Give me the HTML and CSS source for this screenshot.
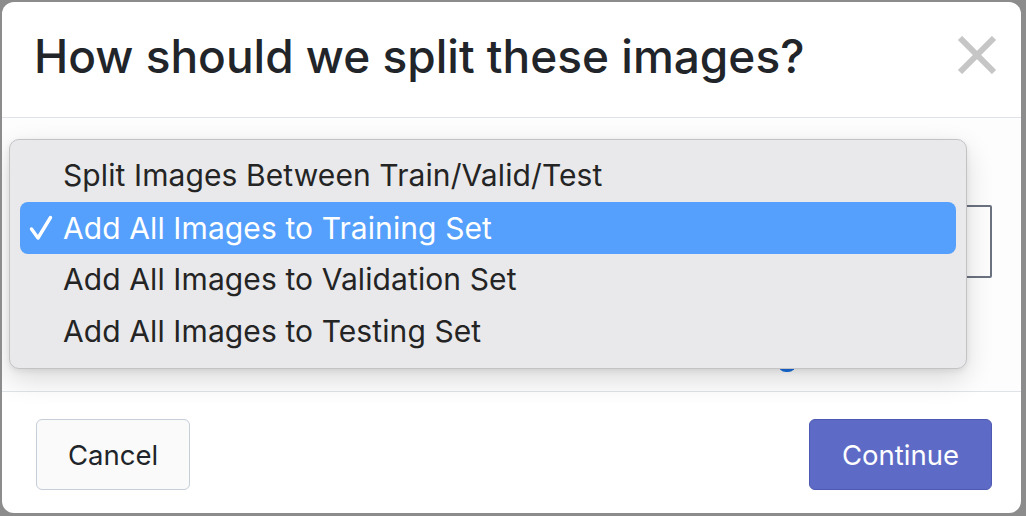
FILE: index.html
```html
<!DOCTYPE html>
<html>
<head>
<meta charset="utf-8">
<link rel="stylesheet" href="styles.css">
</head>
<body>
<div class="modal">
  <div class="modal-header">
    <h1 class="title">How should we split these images?</h1>
    <button class="close" aria-label="Close">
      <svg width="40" height="38" viewBox="0 0 40 38"><path d="M3 2 L37 36 M37 2 L3 36" stroke="#c6c6c6" stroke-width="6" stroke-linecap="butt"/></svg>
    </button>
  </div>
  <div class="modal-body">
    <div class="select-box"></div>
    <span class="link-peek"></span>
    <div class="menu">
      <div class="menu-item">Split Images Between Train/Valid/Test</div>
      <div class="menu-item selected"><svg class="check" width="24" height="26" viewBox="0 0 24 26"><path d="M2.5 14 L9 23 L21.5 2.5" fill="none" stroke="#ffffff" stroke-width="3.4" stroke-linecap="round" stroke-linejoin="round"/></svg>Add All Images to Training Set</div>
      <div class="menu-item">Add All Images to Validation Set</div>
      <div class="menu-item">Add All Images to Testing Set</div>
    </div>
  </div>
  <div class="modal-footer">
    <button class="btn btn-cancel">Cancel</button>
    <button class="btn btn-continue">Continue</button>
  </div>
</div>
</body>
</html>
```

FILE: styles.css
```css
html, body {
  margin: 0;
  padding: 0;
}
body {
  width: 1026px;
  height: 516px;
  background: #8c8c8c;
  font-family: "Inter", "Noto Sans", sans-serif;
  overflow: hidden;
}
.modal {
  margin: 2px 0 0 2px;
  width: 1019px;
  height: 511px;
  background: #ffffff;
  border-radius: 12px;
  display: flex;
  flex-direction: column;
  overflow: hidden;
}
.modal-header {
  height: 115px;
  flex: none;
  border-bottom: 1px solid #dfe2e6;
  display: flex;
  align-items: center;
  justify-content: space-between;
  padding: 0 24px 0 32px;
}
.title {
  margin: 0;
  font-size: 46px;
  font-weight: 500;
  color: #212529;
  letter-spacing: 0;
  margin-top: -8px;
}
.close {
  border: none;
  background: none;
  padding: 0;
  margin-top: -9px;
  display: flex;
}
.modal-body {
  height: 273px;
  flex: none;
  position: relative;
  background: #fdfdfd;
}
.select-box {
  position: absolute;
  left: 900px;
  top: 87px;
  width: 86px;
  height: 69px;
  border: 2px solid #6b7280;
  border-radius: 2px;
}
.link-peek {
  position: absolute;
  left: 776px;
  top: 243px;
  width: 12px;
  height: 8px;
  border: 3px solid #1a6fe0;
  border-top: none;
  border-radius: 0 0 8px 8px;
}
.menu {
  position: absolute;
  left: 7px;
  top: 21px;
  width: 936px;
  padding: 10px 10px;
  background: #e9e9eb;
  border: 1px solid #c3c3c5;
  border-radius: 10px;
  box-shadow: 0 10px 28px rgba(0, 0, 0, 0.14), 0 2px 6px rgba(0, 0, 0, 0.08);
  display: flex;
  flex-direction: column;
}
.menu-item {
  height: 52px;
  display: flex;
  align-items: center;
  padding-left: 43px;
  font-size: 30px;
  color: #242424;
  border-radius: 8px;
  position: relative;
  letter-spacing: 0.1px;
  margin-top: -1px;
  margin-bottom: 1px;
}
.menu-item.selected {
  background: #559ffd;
  color: #ffffff;
  margin-top: 0;
  margin-bottom: 0;
}
.check {
  position: absolute;
  left: 9px;
  top: 13px;
}
.modal-footer {
  flex: 1;
  border-top: 1px solid #dfe2e6;
  display: flex;
  align-items: center;
  justify-content: space-between;
  padding: 4px 29px 0 34px;
}
.btn {
  height: 71px;
  font-family: "Inter", "Noto Sans", sans-serif;
  font-size: 27.5px;
  border-radius: 6px;
  cursor: pointer;
}
.btn-cancel {
  width: 154px;
  background: #fafafa;
  border: 1.5px solid #c6ced8;
  color: #212529;
}
.btn-continue {
  width: 183px;
  background: #5e6bc6;
  border: 1.5px solid #4d59b3;
  color: #ffffff;
}
```
